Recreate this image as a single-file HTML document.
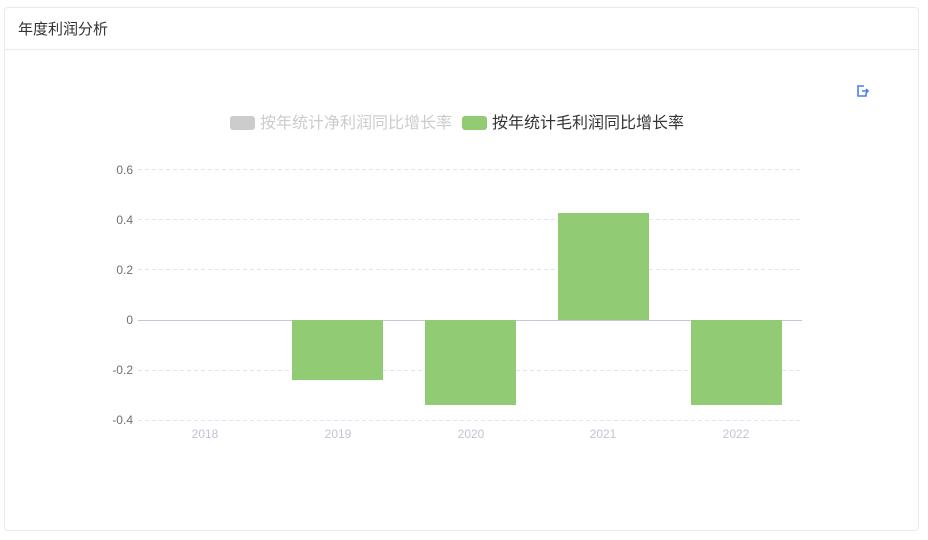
<!DOCTYPE html>
<html><head><meta charset="utf-8"><style>
body{margin:0;width:928px;height:540px;background:#fff;font-family:"Liberation Sans","Noto Sans CJK SC",sans-serif;position:relative;overflow:hidden}
.card{position:absolute;left:4px;top:7px;width:913px;height:522px;border:1px solid #e8eaec;border-radius:4px}
.hd{position:absolute;left:0;top:0;right:0;height:41px;border-bottom:1px solid #e8eaec;font-size:15px;color:#333;line-height:44px;padding-left:13px}
</style></head><body>
<div class="card"><div class="hd">年度利润分析</div></div>
<svg width="928" height="540" style="position:absolute;left:0;top:0" font-family="Liberation Sans, Noto Sans CJK SC, sans-serif">
<g fill="none" stroke="#4e7cf5" stroke-width="1.6"><path d="M864 86h-6v10h8v-3"/><path d="M862 91h6M866 89l2 2-2 2"/></g>
<rect x="230" y="116" width="25" height="14" rx="3" fill="#ccc"/>
<text x="260" y="128" font-size="16" fill="#ccc">按年统计净利润同比增长率</text>
<rect x="462" y="116" width="25" height="14" rx="3" fill="#91cc75"/>
<text x="492" y="128" font-size="16" fill="#333">按年统计毛利润同比增长率</text>
<g stroke="#e0e6f1" stroke-dasharray="4,3"><path d="M138 169.5h664M138 219.5h664M138 269.5h664M138 370.5h664M138 420.5h664"/></g>
<path d="M138 320.5h664" stroke="#c4c6d8"/>
<g font-size="12" fill="#6e7079" text-anchor="end"><text x="133" y="174">0.6</text><text x="133" y="224">0.4</text><text x="133" y="274">0.2</text><text x="133" y="324">0</text><text x="133" y="374">-0.2</text><text x="133" y="424">-0.4</text></g>
<g fill="#91cc75"><rect x="292" y="320" width="91" height="60"/><rect x="425" y="320" width="91" height="85"/><rect x="558" y="213" width="91" height="107"/><rect x="691" y="320" width="91" height="85"/></g>
<g font-size="12" fill="#c0c4d6" text-anchor="middle"><text x="205" y="438">2018</text><text x="338" y="438">2019</text><text x="471" y="438">2020</text><text x="603" y="438">2021</text><text x="736" y="438">2022</text></g>
</svg>
</body></html>
